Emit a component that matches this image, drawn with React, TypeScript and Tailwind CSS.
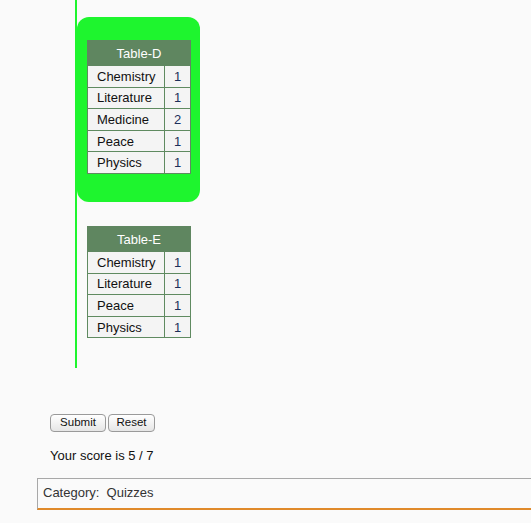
const tables = [
  {
    title: "Table-D",
    rows: [
      ["Chemistry", "1"],
      ["Literature", "1"],
      ["Medicine", "2"],
      ["Peace", "1"],
      ["Physics", "1"],
    ],
  },
  {
    title: "Table-E",
    rows: [
      ["Chemistry", "1"],
      ["Literature", "1"],
      ["Peace", "1"],
      ["Physics", "1"],
    ],
  },
]

function ScoreTable({ title, rows }: { title: string; rows: string[][] }) {
  return (
    <table className="border-collapse w-[104px] text-[13px] leading-none">
      <thead>
        <tr>
          <th
            colSpan={2}
            className="h-[25px] bg-[#5f8660] text-white font-normal border border-[#5f8660]"
          >
            {title}
          </th>
        </tr>
      </thead>
      <tbody>
        {rows.map(([name, count]) => (
          <tr key={name} className="h-[21.6px] bg-[#f4f4f4]">
            <td className="w-[77px] border border-[#5f8a60] pl-[9px] text-[#111]">{name}</td>
            <td className="border border-[#5f8a60] text-center text-[#1c2f5a]">{count}</td>
          </tr>
        ))}
      </tbody>
    </table>
  )
}

export default function App() {
  return (
    <div className="w-[531px] h-[523px] bg-[#fafafa] overflow-hidden font-['Liberation_Sans',Arial,sans-serif] text-[13px]">
      <div className="ml-[75px] h-[368px] border-l-2 border-[#1ef52e] pt-[17px]">
        <div className="w-[123px] h-[185px] rounded-[12px] bg-[#1ef52e] pl-[10px] pt-[23px]">
          <ScoreTable {...tables[0]} />
        </div>
        <div className="pl-[10px] pt-[24px]">
          <ScoreTable {...tables[1]} />
        </div>
      </div>

      <div className="ml-[50px] mt-[46px] flex gap-[2px]">
        <button className="w-[56px] h-[18px] text-[11.5px] leading-none rounded-[4px] border border-[#9a9a9a] bg-gradient-to-b from-white to-[#e6e6e6] text-[#111]">
          Submit
        </button>
        <button className="w-[47px] h-[18px] text-[11.5px] leading-none rounded-[4px] border border-[#9a9a9a] bg-gradient-to-b from-white to-[#e6e6e6] text-[#111]">
          Reset
        </button>
      </div>

      <p className="ml-[50px] mt-[14px] text-[13px] text-[#111]">Your score is 5 / 7</p>

      <div className="ml-[37px] mt-[12px] h-[32px] border-t border-l border-[#a8a8a8] border-b-2 border-b-[#e08a2a] flex items-center pl-[5px] text-[#333]">
        Category:&nbsp; Quizzes
      </div>
    </div>
  )
}
